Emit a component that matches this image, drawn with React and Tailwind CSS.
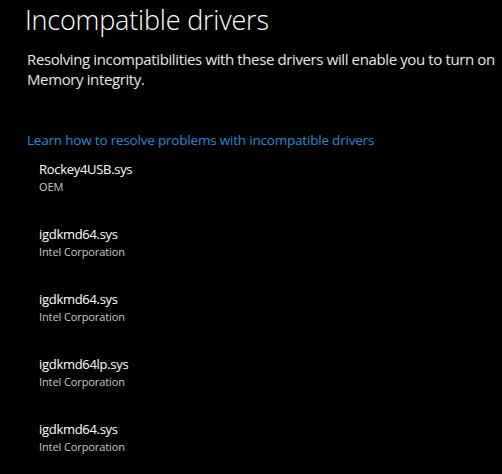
export default function App() {
  const items = [
    ["Rockey4USB.sys", "OEM"],
    ["igdkmd64.sys", "Intel Corporation"],
    ["igdkmd64.sys", "Intel Corporation"],
    ["igdkmd64lp.sys", "Intel Corporation"],
    ["igdkmd64.sys", "Intel Corporation"],
  ];
  return (
    <div className="w-[502px] h-[474px] bg-black overflow-hidden text-white" style={{ fontFamily: '"Segoe UI", "Open Sans", sans-serif' }}>
      <h1 className="pl-[25px] pt-0 text-[27px] font-light leading-[40px] tracking-[-0.2px]">Incompatible drivers</h1>
      <p className="pl-[27px] mt-[9px] text-[15px] leading-[20px] text-[#e6e6e6] tracking-[-0.38px] whitespace-nowrap">
        Resolving incompatibilities with these drivers will enable you to turn on
        <br />
        Memory integrity.
      </p>
      <a className="block pl-[27px] mt-[42px] text-[13.5px] leading-[18px] text-[#2f87d4] tracking-[-0.2px]">
        Learn how to resolve problems with incompatible drivers
      </a>
      <div className="pl-[39px] mt-[11px] flex flex-col gap-[30px]">
        {items.map(([name, vendor], i) => (
          <div key={i} className="flex flex-col">
            <div className="text-[13px] leading-[18px] text-white tracking-[-0.3px]">{name}</div>
            <div className="text-[11px] leading-[17px] text-[#c8c8c8] tracking-[-0.1px]">{vendor}</div>
          </div>
        ))}
      </div>
    </div>
  );
}
